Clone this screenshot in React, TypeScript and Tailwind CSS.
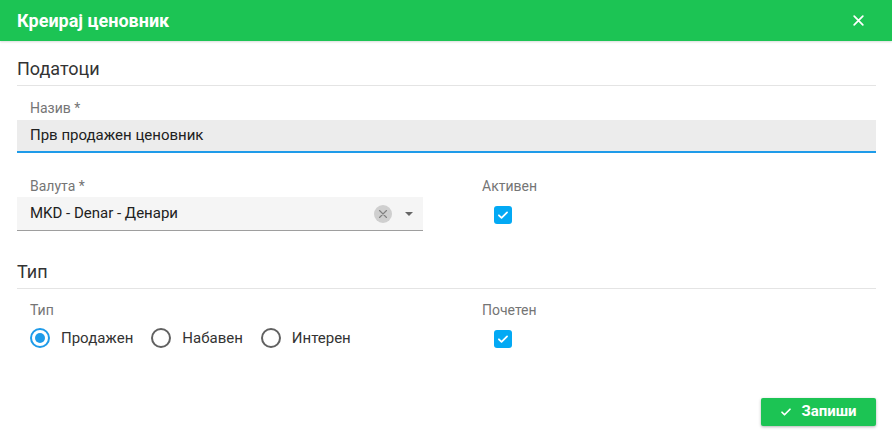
import React from 'react';

const CheckBox = () => (
  <span className="flex h-[18px] w-[18px] items-center justify-center rounded-[3px] bg-[#03a9f4]">
    <svg viewBox="0 0 24 24" className="h-[14px] w-[14px]" fill="none" stroke="white" strokeWidth="3" strokeLinecap="round" strokeLinejoin="round">
      <path d="M5 12.5l4.5 4.5L19 7.5" />
    </svg>
  </span>
);

const Radio = ({ checked, label }: { checked?: boolean; label: string }) => (
  <label className="flex items-center gap-[11px]">
    <span
      className={
        checked
          ? 'flex h-[20px] w-[20px] items-center justify-center rounded-full border-2 border-[#1e9be9]'
          : 'flex h-[20px] w-[20px] items-center justify-center rounded-full border-2 border-[#616161]'
      }
    >
      {checked && <span className="h-[10px] w-[10px] rounded-full bg-[#1e9be9]" />}
    </span>
    <span className="text-[15px] text-[#333]">{label}</span>
  </label>
);

const App = () => {
  return (
    <div className="h-[432px] w-[892px] bg-white" style={{ fontFamily: 'Roboto, "Liberation Sans", sans-serif' }}>
      {/* Header */}
      <div className="flex h-[41px] items-center justify-between bg-[#1cc454] px-[17px] shadow-[0_1px_2px_rgba(0,0,0,0.15)]">
        <h1 className="text-[18px] font-bold text-white">Креирај ценовник</h1>
        <svg viewBox="0 0 24 24" className="mr-[10px] h-[13px] w-[13px]" fill="none" stroke="white" strokeWidth="3.2" strokeLinecap="round">
          <path d="M4 4l16 16M20 4L4 20" />
        </svg>
      </div>

      <div className="pl-[17px] pr-[16px]">
        {/* Податоци */}
        <h2 className="mt-[16px] border-b border-[#e4e4e4] pb-[4px] text-[18px] leading-[24px] text-[#333]">Податоци</h2>

        <div className="mt-[14px] pl-[13px] text-[14px] leading-[16px] text-[#757575]">Назив *</div>
        <div className="mt-[4px] flex h-[33px] items-center border-b-2 border-[#1e9be9] bg-[#ececec] px-[13px] text-[15px] text-[#212121]">
          Прв продажен ценовник
        </div>

        <div className="mt-[25px] grid grid-cols-[406px_1fr] gap-x-[46px]">
          <div>
            <div className="pl-[13px] text-[14px] leading-[16px] text-[#757575]">Валута *</div>
            <div className="mt-[3px] flex h-[34px] items-center border-b border-[#9e9e9e] bg-[#f5f5f5] pl-[13px] pr-[10px]">
              <span className="flex-1 text-[15px] text-[#212121]">MKD - Denar - Денари</span>
              <span className="flex h-[18px] w-[18px] items-center justify-center rounded-full bg-[#cfcfcf]">
                <svg viewBox="0 0 24 24" className="h-[12px] w-[12px]" fill="none" stroke="#808080" strokeWidth="2.2" strokeLinecap="round">
                  <path d="M5 5l14 14M19 5L5 19" />
                </svg>
              </span>
              <svg viewBox="0 0 10 5" className="ml-[13px] h-[4px] w-[8px]" fill="#666">
                <path d="M0 0h10L5 5z" />
              </svg>
            </div>
          </div>
          <div>
            <div className="pl-[13px] text-[14px] leading-[16px] text-[#757575]">Активен</div>
            <div className="mt-[12px] pl-[25px]">
              <CheckBox />
            </div>
          </div>
        </div>

        {/* Тип */}
        <h2 className="mt-[29px] border-b border-[#e4e4e4] pb-[4px] text-[18px] leading-[24px] text-[#333]">Тип</h2>

        <div className="mt-[13px] grid grid-cols-[406px_1fr] gap-x-[46px]">
          <div>
            <div className="pl-[13px] text-[14px] leading-[16px] text-[#757575]">Тип</div>
            <div className="mt-[9px] flex items-center gap-[18px] pl-[13px]">
              <Radio checked label="Продажен" />
              <Radio label="Набавен" />
              <Radio label="Интерен" />
            </div>
          </div>
          <div>
            <div className="pl-[13px] text-[14px] leading-[16px] text-[#757575]">Почетен</div>
            <div className="mt-[12px] pl-[25px]">
              <CheckBox />
            </div>
          </div>
        </div>

        <div className="mt-[48px] flex justify-end">
          <button className="flex h-[28px] w-[115px] items-center justify-center gap-[9px] rounded-[2px] bg-[#1cc454] text-[15px] font-bold text-white shadow-[0_1px_3px_rgba(0,0,0,0.3)]">
            <svg viewBox="0 0 24 24" className="h-[12px] w-[12px]" fill="none" stroke="white" strokeWidth="3.5" strokeLinecap="round" strokeLinejoin="round">
              <path d="M4 12.5l5 5L20 6.5" />
            </svg>
            Запиши
          </button>
        </div>
      </div>
    </div>
  );
};

export default App;
